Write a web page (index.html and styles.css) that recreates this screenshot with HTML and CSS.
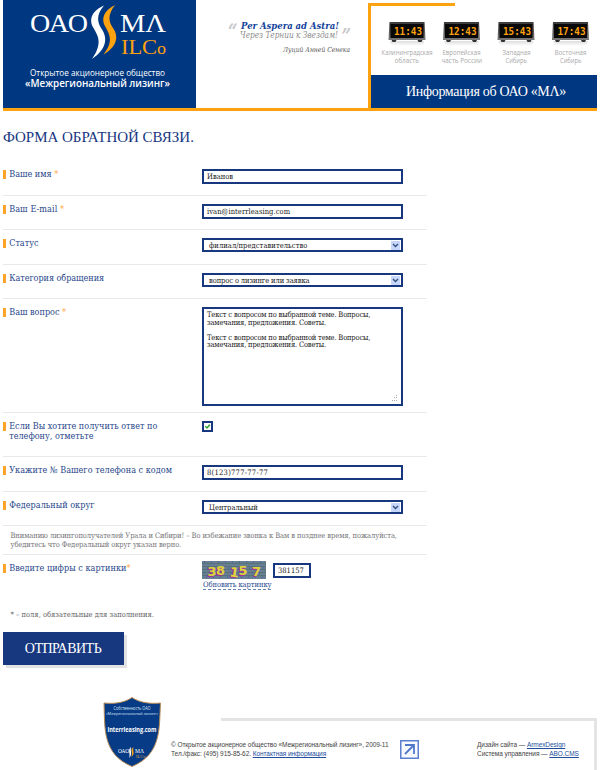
FILE: index.html
```html
<!DOCTYPE html>
<html lang="ru">
<head>
<meta charset="utf-8">
<title>Форма обратной связи</title>
<link rel="stylesheet" href="styles.css">
</head>
<body>
<header class="header">
  <div class="brand">
    <svg width="193" height="108" viewBox="3 0 193 108">
      <g class="logo-serif">
        <text x="30" y="31.5" font-size="25" textLength="58" lengthAdjust="spacingAndGlyphs" fill="#fff">ОАО</text>
        <text x="120" y="31.5" font-size="25" textLength="46" lengthAdjust="spacingAndGlyphs" fill="#fff">МΛ</text>
        <text x="121" y="54" font-size="20" textLength="45" lengthAdjust="spacingAndGlyphs" fill="#ffa20f">ILC<tspan font-size="16">o</tspan></text>
      </g>
      <path fill="#fff" d="M104 5.500C93 10 88 19 93.500 28C98 36 103 43 92 59C107 49 107.500 38 102 29.500C97 22 96 15 104 5.500Z"/>
      <path fill="#ffa20f" d="M115 5C105 10 100 18 105.500 27C110 35 113.500 42 103.500 54.500C118 46 118.500 36 113 28C108 21 108 14 115 5Z"/>
      <g class="logo-sans" fill="#fff">
        <text x="30" y="76" font-size="8.800" textLength="135" lengthAdjust="spacingAndGlyphs">Открытое акционерное общество</text>
        <text x="25" y="87" font-size="10" font-weight="600" textLength="145" lengthAdjust="spacingAndGlyphs">«Межрегиональный лизинг»</text>
      </g>
    </svg>
  </div>
  <div class="quote">
    <svg width="172" height="108" viewBox="196 0 172 108">
      <g class="quote-text">
        <text x="228" y="37.500" font-size="20" font-weight="bold" fill="#c8c8c8" textLength="9.500" lengthAdjust="spacingAndGlyphs">“</text>
        <text x="241" y="28.5" font-size="9.5" font-weight="bold" fill="#12429a" textLength="98" lengthAdjust="spacingAndGlyphs">Per Aspera ad Astra!</text>
        <text x="240" y="38" font-size="8.5" fill="#8c8c8c" textLength="98" lengthAdjust="spacingAndGlyphs">Через Тернии к Звездам!</text>
        <text x="341.500" y="42.500" font-size="20" font-weight="bold" fill="#c8c8c8" textLength="9.500" lengthAdjust="spacingAndGlyphs">”</text>
        <text x="283" y="52" font-size="7" fill="#555" textLength="67" lengthAdjust="spacingAndGlyphs">Луций Анней Сенека</text>
      </g>
    </svg>
  </div>
  <div class="info">
    <div class="info-rule"></div>
    <svg class="clocks" width="226" height="69" viewBox="371 6 226 69">
      <defs>
        <linearGradient id="case" x1="0" y1="0" x2="0" y2="1"><stop offset="0" stop-color="#3a3a3a"/><stop offset="1" stop-color="#777"/></linearGradient>
        <linearGradient id="shade" x1="0" y1="0" x2="0" y2="1"><stop offset="0" stop-color="#ddd"/><stop offset="1" stop-color="#fff"/></linearGradient>
        <g id="clock">
          <path fill="url(#shade)" d="M1 19H36L34 24H3Z"/>
          <path fill="#333" d="M3 18H8L7 20H4ZM29 18H34L33 20H30Z"/>
          <path fill="url(#case)" d="M1 0H36L37 18H0Z"/>
          <rect x="2" y="2" width="33" height="14" fill="#080808"/>
        </g>
      </defs>
      <use href="#clock" x="388.500" y="22"/><use href="#clock" x="443" y="22"/><use href="#clock" x="497.500" y="22"/><use href="#clock" x="552" y="22"/>
      <g class="digits">
        <text x="394" y="35" textLength="28" lengthAdjust="spacingAndGlyphs">11:43</text>
        <text x="448.500" y="35" textLength="28" lengthAdjust="spacingAndGlyphs">12:43</text>
        <text x="503" y="35" textLength="28" lengthAdjust="spacingAndGlyphs">15:43</text>
        <text x="557.500" y="35" textLength="28" lengthAdjust="spacingAndGlyphs">17:43</text>
      </g>
      <g class="zones">
        <text x="381.500" y="55" textLength="51" lengthAdjust="spacingAndGlyphs">Калининградская</text><text x="394.500" y="63" textLength="24.500" lengthAdjust="spacingAndGlyphs">область</text>
        <text x="442.500" y="55" textLength="38" lengthAdjust="spacingAndGlyphs">Европейская</text><text x="441.500" y="63" textLength="40.500" lengthAdjust="spacingAndGlyphs">часть России</text>
        <text x="502.500" y="55" textLength="28" lengthAdjust="spacingAndGlyphs">Западная</text><text x="505.500" y="63" textLength="21.500" lengthAdjust="spacingAndGlyphs">Сибирь</text>
        <text x="554.500" y="55" textLength="32" lengthAdjust="spacingAndGlyphs">Восточная</text><text x="560" y="63" textLength="21.500" lengthAdjust="spacingAndGlyphs">Сибирь</text>
      </g>
    </svg>
    <div class="info-title">Информация об ОАО «МΛ»</div>
  </div>
</header>

<main class="main">
  <h1 class="title">ФОРМА ОБРАТНОЙ СВЯЗИ.</h1>
  <form class="form">
    <div class="row row-odd"><label class="label">Ваше имя <i class="req">*</i></label><input class="field" value="Иванов"></div>
    <div class="row"><label class="label email-label">Ваш E-mail <i class="req">*</i></label><input class="field email" value="ivan@interrleasing.com"></div>
    <div class="row row-odd"><label class="label">Статус</label><div class="select status"><span>филиал/представительство</span><svg class="arrow" viewBox="0 0 9 9"><path d="M2 3L4.500 5.500L7 3"/></svg></div></div>
    <div class="row"><label class="label category-label">Категория обращения</label><div class="select category"><span>вопрос о лизинге или заявка</span><svg class="arrow" viewBox="0 0 9 9"><path d="M2 3L4.500 5.500L7 3"/></svg></div></div>
    <div class="row row-question"><label class="label">Ваш вопрос <i class="req">*</i></label>
      <div class="area">Текст с вопросом по выбранной теме. Вопросы,<br>замечания, предложения. Советы.<br><br>Текст с вопросом по выбранной теме. Вопросы,<br>замечания, предложения. Советы.
        <svg class="grip" width="7" height="7" viewBox="0 0 7 7"><path d="M5 0h1v1H5zM3 2h1v1H3zM5 2h1v1H5zM1 5h1v1H1zM3 5h1v1H3zM5 5h1v1H5z"/></svg>
      </div>
    </div>
    <div class="row row-phone"><label class="label">Если Вы хотите получить ответ по<br>телефону, отметьте</label><span class="check"><svg viewBox="0 0 7 7"><path d="M1.300 3.300L3 5L5.800 1.800"/></svg></span></div>
    <div class="row row-odd"><label class="label phone-label">Укажите № Вашего телефона с кодом</label><input class="field phone" value="8(123)777-77-77"></div>
    <div class="row"><label class="label region-label">Федеральный округ</label><div class="select region"><span>Центральный</span><svg class="arrow" viewBox="0 0 9 9"><path d="M2 3L4.500 5.500L7 3"/></svg></div></div>
    <p class="note">Вниманию лизингополучателей Урала и Сибири! – Во избежание звонка к Вам в позднее время, пожалуйста,<br>убедитесь что Федеральный округ указан верно.</p>
    <div class="row row-captcha"><label class="label captcha-label">Введите цифры с картинки<i class="req">*</i></label>
      <div class="captcha">
        <div class="captcha-line">
          <svg class="captcha-pic" width="64" height="18" viewBox="0 0 64 18">
            <rect width="64" height="18" fill="#687e94"/>
            <path stroke="#526d70" stroke-width=".7" d="M0 2.500H64M0 5.500H64M0 8.500H64M0 11.500H64M0 14.500H64"/>
            <path stroke="#49539a" stroke-dasharray="1 6" d="M2 1H64M5 7H64M1 12H64M4 16H64"/>
            <path stroke="#4c8b50" stroke-dasharray="1 9" d="M6 3H64M2 10H64M8 15H64"/>
            <g class="captcha-digits">
              <text x="5.500" y="15">3</text><text x="14" y="13.500">8</text><text x="28" y="15.500" transform="rotate(8 30 10)">1</text><text x="36.500" y="13.500">5</text><text x="50" y="14.500">7</text>
            </g>
          </svg>
          <input class="field code" value="381157">
        </div>
        <a class="refresh">Обновить картинку</a>
      </div>
    </div>
    <p class="required-note">* – поля, обязательные для заполнения.</p>
    <button class="submit" type="button">ОТПРАВИТЬ</button>
  </form>
</main>

<footer class="footer">
  <svg class="shield" width="58" height="73" viewBox="103 697 58 73">
    <path fill="#073b85" stroke="#b98d55" stroke-width="1" d="M132 697.500C124 703 114 704 104 703C105 728 102 754 132 766.500C162 754 159 728 160.500 703C151 704 140 703 132 697.500Z"/>
    <g class="shield-text" fill="#dce8fa">
      <text x="113.500" y="710" font-size="4.500" textLength="37" lengthAdjust="spacingAndGlyphs">Собственность ОАО</text>
      <text x="106" y="715" font-size="4.200" textLength="52" lengthAdjust="spacingAndGlyphs">«Межрегиональный лизинг»</text>
      <text x="107.500" y="732" font-size="6.300" font-weight="bold" fill="#fff" textLength="49" lengthAdjust="spacingAndGlyphs">interrleasing.com</text>
    </g>
    <g class="logo-serif" fill="#fff"><text x="118" y="753" font-size="6" textLength="11" lengthAdjust="spacingAndGlyphs">ОАО</text><text x="135" y="753" font-size="6" textLength="9" lengthAdjust="spacingAndGlyphs">МΛ</text><text x="136" y="757.500" font-size="4.500" fill="#dd9b38">ILCo</text></g>
    <path fill="#fff" d="M131 747C127 750 131 754 129 758C133 754 130 751 131 747Z"/><path fill="#ffa20f" d="M133.500 747C129 750 134 753 131 757C136 754 132 751 133.500 747Z"/>
  </svg>
  <div class="footer-body">
    <div class="footer-rule"></div>
    <div class="footer-content">
      <p class="copyright"><span class="copy-line">© Открытое акционерное общество «Межрегиональный лизинг», 2009-11</span><br><span class="tel-line">Тел./факс: (495) 915-85-62. <a>Контактная информация</a></span></p>
      <svg class="counter" width="19" height="19" viewBox="0 0 19 19"><rect x=".75" y=".75" width="17.500" height="17.500" fill="#f7f9ff" stroke="#5c7fce" stroke-width="1.500"/><path d="M5 5H14V14M13.500 5.500L5 14" fill="none" stroke="#5078ca" stroke-width="1.800"/></svg>
      <p class="credits"><span class="design-line">Дизайн сайта — <a>ArmexDesign</a></span><br><span class="cms-line">Система управления — <a>ABO.CMS</a></span></p>
    </div>
  </div>
</footer>
</body>
</html>
```
FILE: styles.css
```css
* { box-sizing: border-box; }
body { margin: 0; width: 600px; height: 770px; overflow: hidden; background: #fff; font-family: "DejaVu Serif Condensed", "DejaVu Serif", serif; color: #17377f; }
p, h1 { margin: 0; font-weight: normal; }
svg { display: block; }

.header { display: flex; width: 594px; height: 111px; margin-left: 3px; border-bottom: 3px solid #ffa20f; }
.brand { width: 193px; background: #003781; }
.logo-serif { font-family: "Liberation Serif", serif; }
.logo-sans { font-family: "Open Sans", sans-serif; }
.shield-text { font-family: "Open Sans", sans-serif; }
.quote { width: 172px; }
.quote-text { font-family: "DejaVu Serif Condensed", "DejaVu Serif", serif; font-style: italic; }
.info { display: flex; flex-direction: column; width: 229px; height: 105px; margin-top: 3px; border-left: 3px solid #ffa20f; }
.info-rule { width: 84px; height: 3px; background: #ffa20f; }
.digits { font: bold 11px "DejaVu Sans Mono", monospace; fill: #ffa20f; }
.zones { font: 6.5px "Open Sans", sans-serif; fill: #a9a9a9; }
.info-title { height: 33px; padding-left: 35px; background: #003781; color: #fff; font: 14px/33px "Liberation Serif", serif; letter-spacing: -.32px; white-space: nowrap; }

.main { width: 424px; margin-left: 3px; }
.title { height: 50px; padding-top: 16px; font: 15px/20px "Liberation Serif", serif; letter-spacing: -.02px; white-space: nowrap; }
.row { display: grid; grid-template-columns: 199px 201px; align-items: start; height: 34px; padding-top: 8px; border-bottom: 1px solid #e9e9e9; }
.row-odd { height: 35px; }
.row-question { height: 114px; }
.row-phone { height: 44px; }
.label { margin-top: 1px; border-left: 3px solid transparent; border-image: linear-gradient(#ffa329 9px, transparent 9px) 0 0 0 3; padding: .4px 0 0 3.2px; color: #27468a; font-size: 9px; line-height: 9.5px; white-space: nowrap; }
.category-label { letter-spacing: -.04px; }
.email-label { letter-spacing: .08px; }
.phone-label, .region-label, .captcha-label { letter-spacing: .03px; }
.req { font-style: normal; color: #ffa94a; }
.field { display: block; width: 201px; height: 15px; padding: 0 3px; border: 2px solid #17377f; outline: 0; border-radius: 0; background: #fff; color: #222; font: 7.5px/11px "DejaVu Serif Condensed", "DejaVu Serif", serif; }
.email { letter-spacing: .07px; }
.phone { letter-spacing: .27px; }
.select { display: flex; justify-content: space-between; align-items: center; height: 14px; padding: 0 1px 0 5px; border: 2px solid #17377f; color: #222; font-size: 7.5px; line-height: 9px; white-space: nowrap; }
.status { letter-spacing: .06px; }
.category { letter-spacing: -.11px; }
.arrow { width: 9px; height: 9px; background: #c7d6fb; fill: none; stroke: #35517e; stroke-width: 1.4; }
.area { position: relative; height: 99px; padding: 2px 3px; border: 2px solid #17377f; color: #222; font-size: 7.5px; line-height: 7.5px; letter-spacing: -.17px; white-space: nowrap; }
.grip { position: absolute; right: 3px; bottom: 2px; fill: #aaa; }
.check { width: 11px; height: 11px; border: 2px solid #17377f; }
.check svg { width: 7px; height: 7px; fill: none; stroke: #2aa62a; stroke-width: 1.5; }
.note { height: 29px; padding: 6px 0 0 7.5px; border-bottom: 1px solid #e9e9e9; color: #77777a; font-size: 7.5px; line-height: 8.5px; letter-spacing: -.085px; white-space: nowrap; }
.row-captcha { height: 50px; padding-top: 6px; border: 0; }
.row-captcha .label { margin-top: 3px; }
.captcha-line { display: flex; align-items: center; gap: 7px; height: 18px; }
.code { width: 38px; padding-right: 0; }
.captcha-digits { font: bold 13px "DejaVu Sans", sans-serif; fill: #dbd43b; text-shadow: -1px 1px 0 #a629a5; }
.refresh { display: inline-block; margin: 2px 0 0 1px; border-bottom: 1px dashed #6b83b3; color: #2c4e92; font-size: 7.5px; line-height: 8px; letter-spacing: -.06px; white-space: nowrap; vertical-align: top; }
.required-note { height: 27px; padding: 4.5px 0 0 7.5px; color: #666; font-size: 7.5px; line-height: 9px; white-space: nowrap; }
.submit { display: block; width: 121px; height: 33px; padding: 0 1px 0 0; border: 0; background: #17377f; box-shadow: 3px 3px 0 #e2e2e5; color: #fff; font: 14px/33px "Liberation Serif", serif; letter-spacing: -.5px; }

.footer { display: flex; margin: 32px 0 0 103px; height: 73px; }
.shield { flex: none; }
.footer-body { width: 436px; height: 73px; padding-top: 21px; }
.footer-rule { width: 376px; height: 3px; margin-left: 60px; background: #e4e4e4; }
.footer-content { display: flex; height: 49px; padding: 19px 0 0 10px; border-right: 3px solid #e4e4e4; color: #444; font: 6.5px/9px "Liberation Sans", sans-serif; white-space: nowrap; }
.copyright { width: 229px; }
.copy-line { letter-spacing: -.075px; }
.tel-line { letter-spacing: -.06px; }
.credits { margin-left: 58px; letter-spacing: -.06px; }
.footer a { color: #234e9b; text-decoration: underline; }
```
